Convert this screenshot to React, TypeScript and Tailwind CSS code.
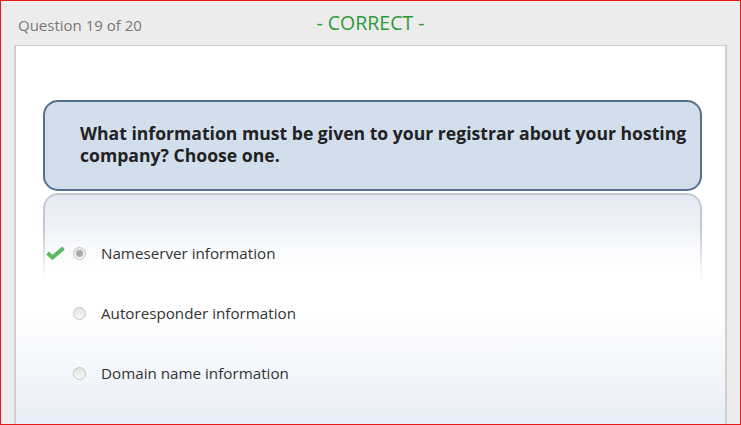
import React from 'react'

const answers = [
  { id: 1, text: 'Nameserver information', selected: true, correct: true },
  { id: 2, text: 'Autoresponder information', selected: false, correct: false },
  { id: 3, text: 'Domain name information', selected: false, correct: false },
]

const Check = () => (
  <svg width="19" height="14" viewBox="0 0 19 14" className="shrink-0">
    <path d="M1.5 7 L6.5 11.5 L17.5 2" fill="none" stroke="#5db95d" strokeWidth="4" strokeLinejoin="miter" />
  </svg>
)

const Radio = ({ on }: { on: boolean }) => (
  <span className="w-[13px] h-[13px] rounded-full border border-[#c4c4c4] bg-gradient-to-b from-[#e4e4e4] to-[#f8f8f8] flex items-center justify-center shrink-0">
    {on && <span className="w-[7px] h-[7px] rounded-full bg-[#a9a9a9]" />}
  </span>
)

const App = () => {
  return (
    <div className="w-[741px] h-[425px] border border-[#e11b1b] bg-[#ececec] flex flex-col overflow-hidden font-['Open_Sans',sans-serif]">
      <div className="h-[44px] shrink-0 grid grid-cols-[1fr_auto_1fr] items-center px-[17px]">
        <span className="text-[15px] text-[#777] mt-[5px]">Question 19 of 20</span>
        <span className="text-[19.5px] text-[#2f9a3a] -mt-[1px]">- CORRECT -</span>
        <span />
      </div>
      <div className="flex-1 ml-[13px] mr-[13px] border-l-2 border-t border-r-2 border-[#d0d0d0] bg-gradient-to-b from-white from-[70%] to-[#e8eef7] relative">
        <div className="ml-[27px] mt-[54px] w-[659px]">
          <div className="h-[91px] rounded-[15px] border-2 border-[#566f8e] bg-[#d3deed] pl-[35px] pr-[8px] flex items-center">
            <p className="text-[17.6px] leading-[22px] font-bold text-[#222] -mt-[3px]">
              What information must be given to your registrar about your hosting company? Choose one.
            </p>
          </div>
          <div className="relative">
            <div className="absolute left-0 right-0 top-[2px] h-[88px] rounded-t-[15px] border-2 border-b-0 border-[#c3c8cf] bg-gradient-to-b from-[#e4eaf3] to-white [mask-image:linear-gradient(to_bottom,black_40%,transparent)]" />
            <ul className="relative pt-[51px] flex flex-col gap-[38px]">
              {answers.map((a) => (
                <li key={a.id} className="flex items-center h-[22px]">
                  <span className="w-[30px] pl-[3px] flex items-center">{a.correct && <Check />}</span>
                  <Radio on={a.selected} />
                  <span className="ml-[15px] text-[15.2px] text-[#333]">{a.text}</span>
                </li>
              ))}
            </ul>
          </div>
        </div>
      </div>
    </div>
  )
}

export default App
